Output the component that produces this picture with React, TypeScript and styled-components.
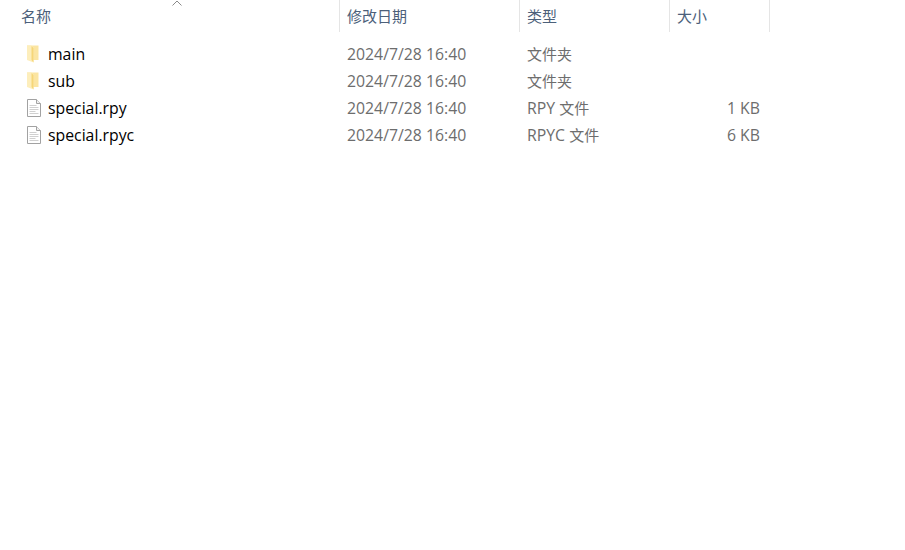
import React from 'react';
import styled, {createGlobalStyle} from 'styled-components';

const GlobalStyle = createGlobalStyle`
  html, body {
    margin: 0;
    padding: 0;
    background: #ffffff;
    font-family: "Open Sans", "Noto Sans CJK SC", sans-serif;
  }
`;

interface FileEntry {
    name: string,
    date: string,
    ext: string,
    type: string,
    size: string,
    isFolder: boolean
}

const files: FileEntry[] = [
    {name: 'main', date: '2024/7/28 16:40', ext: '', type: '文件夹', size: '', isFolder: true},
    {name: 'sub', date: '2024/7/28 16:40', ext: '', type: '文件夹', size: '', isFolder: true},
    {name: 'special.rpy', date: '2024/7/28 16:40', ext: 'RPY ', type: '文件', size: '1 KB', isFolder: false},
    {name: 'special.rpyc', date: '2024/7/28 16:40', ext: 'RPYC ', type: '文件', size: '6 KB', isFolder: false},
];

const FolderIcon = () => (
    <IconSvg viewBox="0 0 16 18">
        <path d="M1 0.5h11.5v14.5H1z" fill="#fbe5a2"/>
        <path d="M1 0.5h4.5l2 2V17.5L1 15z" fill="#fdeebc"/>
        <path d="M5.5 1v14l2 2.5V3z" fill="#f6d678"/>
    </IconSvg>
);

const DocIcon = () => (
    <IconSvg viewBox="0 0 16 18">
        <path d="M1.5 0.5h9l4 4v13h-13z" fill="#ffffff" stroke="#a2a2a2"/>
        <path d="M10.5 0.5v4h4" fill="#f0f0f0" stroke="#a2a2a2"/>
        <path d="M3.5 6.5h7M3.5 8.5h9M3.5 10.5h9M3.5 12.5h6M3.5 14.5h9" stroke="#d0d0d0"/>
    </IconSvg>
);

export default function App() {
    return (
        <>
            <GlobalStyle/>
            <Page>
                <HeaderRow>
                    <HeaderCell>
                        名称
                        <SortArrow viewBox="0 0 10 6">
                            <path d="M0.5 5.5L5 1l4.5 4.5" fill="none" stroke="#8a8a8a"/>
                        </SortArrow>
                    </HeaderCell>
                    <HeaderCell>修改日期</HeaderCell>
                    <HeaderCell>类型</HeaderCell>
                    <HeaderCell>大小</HeaderCell>
                </HeaderRow>
                <Rows>
                    {files.map(file => (
                        <Row key={file.name}>
                            <NameCell>
                                {file.isFolder ? <FolderIcon/> : <DocIcon/>}
                                {file.name}
                            </NameCell>
                            <Cell>{file.date}</Cell>
                            <Cell>{file.ext}<TypeLabel>{file.type}</TypeLabel></Cell>
                            <SizeCell>{file.size}</SizeCell>
                        </Row>
                    ))}
                </Rows>
            </Page>
        </>
    );
}

const Page = styled.div`
  width: 905px;
  height: 550px;
  overflow: hidden;
  background: #ffffff;
`;

const HeaderRow = styled.div`
  display: grid;
  grid-template-columns: 340px 180px 150px 100px;
  height: 32px;
`;

const HeaderCell = styled.div`
  position: relative;
  display: flex;
  align-items: center;
  height: 32px;
  padding: 0 0 2px 7px;
  box-sizing: border-box;
  font-size: 15px;
  color: #4c607a;
  border-right: 1px solid #e5e5e5;

  &:first-child {
    padding-left: 21px;
  }
`;

const SortArrow = styled.svg`
  position: absolute;
  left: 172px;
  top: 0;
  width: 10px;
  height: 6px;
`;

const Rows = styled.div`
  display: flex;
  flex-direction: column;
  padding-top: 8px;
`;

const Row = styled.div`
  display: grid;
  grid-template-columns: 340px 180px 150px 100px;
  height: 27px;
  align-items: center;
  font-size: 15.8px;
`;

const Cell = styled.div`
  padding-left: 7px;
  color: #6d6d6d;
  white-space: nowrap;
`;

const TypeLabel = styled.span`
  font-size: 15px;
`;

const NameCell = styled.div`
  display: flex;
  align-items: center;
  gap: 6px;
  padding-left: 26px;
  color: #000000;
`;

const SizeCell = styled(Cell)`
  padding-left: 0;
  padding-right: 10px;
  text-align: right;
`;

const IconSvg = styled.svg`
  width: 16px;
  height: 18px;
  flex-shrink: 0;
`;
